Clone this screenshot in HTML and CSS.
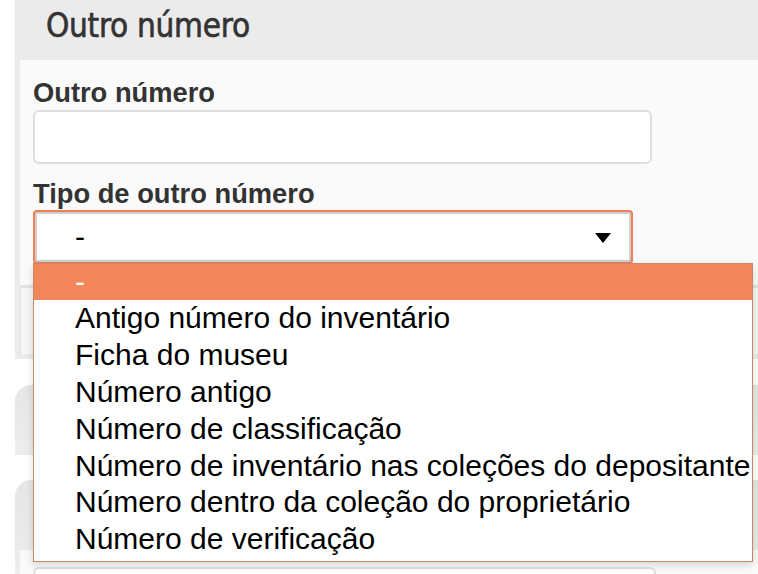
FILE: index.html
```html
<!DOCTYPE html>
<html lang="pt">
<head>
<meta charset="utf-8">
<title>Outro número</title>
<link rel="stylesheet" href="styles.css">
</head>
<body>
<div class="page">
  <section class="panel">
    <h2 class="panel-title">Outro número</h2>
    <div class="panel-body">
      <label class="field-label">Outro número</label>
      <div class="text-input"></div>
      <label class="field-label second">Tipo de outro número</label>
      <div class="select-wrap">
        <div class="select-box">
          <span class="select-value">-</span>
          <svg class="caret" width="16" height="10" viewBox="0 0 16 10"><path d="M0 0H16L8 10Z" fill="#000"/></svg>
        </div>
        <ul class="dropdown">
          <li class="opt active">-</li>
          <li class="opt">Antigo número do inventário</li>
          <li class="opt">Ficha do museu</li>
          <li class="opt">Número antigo</li>
          <li class="opt">Número de classificação</li>
          <li class="opt">Número de inventário nas coleções do depositante</li>
          <li class="opt">Número dentro da coleção do proprietário</li>
          <li class="opt">Número de verificação</li>
        </ul>
      </div>
      <div class="sub-box"></div>
    </div>
    <div class="panel-foot"></div>
  </section>
  <section class="panel2"></section>
  <section class="panel3">
    <div class="panel3-inner"><div class="input-stub"></div></div>
  </section>
</div>
</body>
</html>
```
FILE: styles.css
```css
html, body { margin: 0; padding: 0; background: #fff; }
body { font-family: "Liberation Sans", Arial, sans-serif; overflow: hidden; width: 758px; height: 574px; }
.page { padding-left: 15px; height: 574px; overflow: hidden; }
.panel { background: #ebebeb; width: 743px; }
.panel-title {
  margin: 0; height: 60px; line-height: 52px; padding-left: 31px;
  font-family: "DejaVu Sans Condensed", "DejaVu Sans", sans-serif;
  font-weight: normal; font-size: 33px; color: #333; letter-spacing: -0.3px;
  -webkit-text-stroke: 0.6px #333;
}
.panel-body { background: #fafafa; margin-left: 5px; padding: 18px 0 0 13px; }
.field-label { display: block; font-weight: bold; font-size: 27.3px; color: #333; line-height: 30px; height: 30px; }
.text-input {
  margin-top: 2px; background: #fff;
  border: 2px solid #dedede; border-radius: 6px; box-sizing: border-box; width: 619px; height: 54px;
}
.field-label.second { margin-top: 15px; }
.select-wrap { position: relative; margin-top: 1px; width: 600px; }
.select-box {
  width: 600px; height: 54px; box-sizing: border-box; border: 2px solid #ef7e55; border-radius: 4px;
  box-shadow: inset 0 0 0 2px #cfcfcf; background: #fff; display: flex; align-items: center;
  padding: 0 20px 0 40px; justify-content: space-between;
}
.select-value { font-size: 30px; color: #000; line-height: 1; }
.caret { margin-top: 2px; }
.dropdown {
  position: absolute; left: 0; top: 53px; width: 720px; margin: 0; padding: 0 0 3px; list-style: none;
  background: #fff; border: 1px solid #c9866b; box-sizing: border-box;
  box-shadow: 0 3px 8px rgba(0,0,0,0.15); z-index: 5;
}
.opt { font-size: 30px; line-height: 36px; height: 36.9px; padding-left: 41px; color: #000; white-space: nowrap; }
.opt.active { background: #f2865a; color: #fff; height: 36px; }
.sub-box {
  margin: 21px 0 0 -13px; height: 66px; border-top: 3px solid #e2e2e2; border-left: 1px solid #e2e2e2;
  background: #f6f6f6;
}
.panel-foot { height: 5px; }
.panel2 {
  margin-top: 26px; height: 70px; width: 743px; border-radius: 16px 0 0 0;
  background: linear-gradient(#e6e6e6, #ededed);
}
.panel3 {
  margin-top: 25px; height: 96px; width: 743px; border-radius: 16px 0 0 0;
  background: linear-gradient(#e6e6e6, #ededed); padding-top: 70px; box-sizing: border-box;
}
.panel3-inner { margin-left: 5px; background: #fafafa; height: 26px; padding: 17px 0 0 13px; box-sizing: border-box; }
.input-stub { width: 619px; height: 9px; border: 2px solid #dedede; border-bottom: 0; border-radius: 6px 6px 0 0; background: #fff; }
```
